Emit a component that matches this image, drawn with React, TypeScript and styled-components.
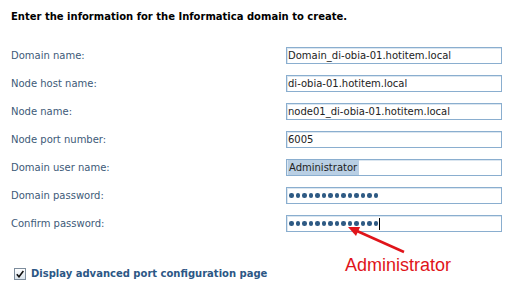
import React from "react";
import styled, { createGlobalStyle } from "styled-components";

const Global = createGlobalStyle`
  html, body { margin: 0; padding: 0; background: #ffffff; }
  body { font-family: "DejaVu Sans", "Liberation Sans", sans-serif; font-size: 10px; }
`;

const Page = styled.div`
  position: relative;
  width: 505px;
  height: 292px;
  box-sizing: border-box;
  padding: 11px 0 0 11px;
  overflow: hidden;
  background: #ffffff;
`;

const Heading = styled.div`
  font-weight: bold;
  color: #000000;
  line-height: 12px;
  height: 12px;
`;

const Form = styled.div`
  display: grid;
  grid-template-columns: 275px 216px;
  grid-auto-rows: 17px;
  row-gap: 11px;
  margin-top: 24px;
`;

const Label = styled.div`
  display: flex;
  align-items: center;
  color: #3d5a78;
  line-height: 12px;
`;

const Field = styled.div`
  box-sizing: border-box;
  height: 17px;
  display: flex;
  align-items: center;
  padding: 0 1px;
  border: 1px solid #8aaecf;
  box-shadow: inset 1px 1px 0 #dbe6f0;
  background: #ffffff;
  color: #222222;
  line-height: 12px;
  white-space: nowrap;
  overflow: hidden;
`;

const Selected = styled.span`
  align-self: stretch;
  display: flex;
  align-items: center;
  padding: 0 2px 0 1px;
  background: #b9cfe4;
`;

const Dots = styled.div`
  display: flex;
  align-items: center;
  gap: 2px;
  padding-left: 1px;
`;

const Dot = styled.span`
  width: 4.5px;
  height: 4.5px;
  border-radius: 50%;
  background: #2e5a84;
`;

const Caret = styled.span`
  width: 1px;
  height: 12px;
  background: #000000;
  margin-left: 1px;
`;

const CheckRow = styled.label`
  display: flex;
  align-items: center;
  gap: 5px;
  margin-top: 36px;
  padding-left: 3px;
  font-weight: bold;
  color: #2c5785;
  line-height: 12px;
`;

const Box = styled.span`
  box-sizing: border-box;
  width: 12px;
  height: 12px;
  border: 1px solid #7d8c9c;
  background: linear-gradient(#ffffff, #d9e3ec);
  display: flex;
  align-items: center;
  justify-content: center;
`;

const ArrowSvg = styled.svg`
  position: absolute;
  left: 340px;
  top: 220px;
`;

const Callout = styled.div`
  position: absolute;
  left: 345px;
  top: 256px;
  font-family: "Liberation Sans", Arial, sans-serif;
  font-size: 18px;
  line-height: 18px;
  color: #e0141a;
`;

const fields: { label: string; value?: string; kind?: "selected" | "dots" | "dotsCaret" }[] = [
  { label: "Domain name:", value: "Domain_di-obia-01.hotitem.local" },
  { label: "Node host name:", value: "di-obia-01.hotitem.local" },
  { label: "Node name:", value: "node01_di-obia-01.hotitem.local" },
  { label: "Node port number:", value: "6005" },
  { label: "Domain user name:", value: "Administrator", kind: "selected" },
  { label: "Domain password:", kind: "dots" },
  { label: "Confirm password:", kind: "dotsCaret" },
];

const DotRun = ({ count }: { count: number }) => (
  <Dots>
    {Array.from({ length: count }).map((_, i) => (
      <Dot key={i} />
    ))}
  </Dots>
);

export default function App() {
  return (
    <Page>
      <Global />
      <Heading>Enter the information for the Informatica domain to create.</Heading>
      <Form>
        {fields.map((f) => (
          <React.Fragment key={f.label}>
            <Label>{f.label}</Label>
            <Field>
              {f.kind === "selected" && <Selected>{f.value}</Selected>}
              {f.kind === "dots" && <DotRun count={14} />}
              {f.kind === "dotsCaret" && (
                <>
                  <DotRun count={14} />
                  <Caret />
                </>
              )}
              {!f.kind && <span>{f.value}</span>}
            </Field>
          </React.Fragment>
        ))}
      </Form>
      <CheckRow>
        <Box>
          <svg width="8" height="8" viewBox="0 0 8 8">
            <path d="M0.8 4.2 L3 6.8 L7.4 1" fill="none" stroke="#111" strokeWidth="1.6" />
          </svg>
        </Box>
        Display advanced port configuration page
      </CheckRow>
      <ArrowSvg width="70" height="40" viewBox="0 0 70 40">
        <line x1="17" y1="11" x2="64" y2="32" stroke="#e0141a" strokeWidth="2.5" />
        <polygon points="8,7 20.1,6.9 16,16.1" fill="#e0141a" />
      </ArrowSvg>
      <Callout>Administrator</Callout>
    </Page>
  );
}
